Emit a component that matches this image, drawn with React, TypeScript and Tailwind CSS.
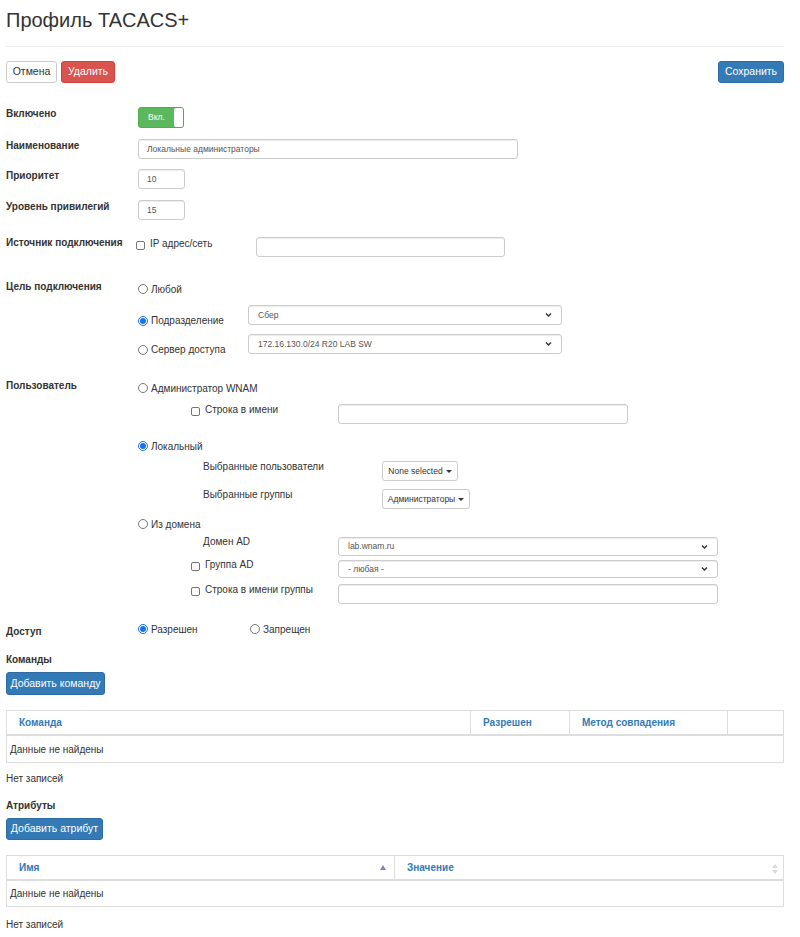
import React from 'react'

function Radio({ checked = false }: { checked?: boolean }) {
    return checked ? (
        <span className="inline-flex w-[10px] h-[10px] rounded-full border border-[#1a73e8] bg-white items-center justify-center shrink-0">
            <span className="w-[6px] h-[6px] rounded-full bg-[#1a73e8]" />
        </span>
    ) : (
        <span className="inline-block w-[10px] h-[10px] rounded-full border border-[#767676] bg-white shrink-0" />
    )
}

function Check() {
    return <span className="inline-block w-[9px] h-[9px] rounded-[2px] border border-[#767676] bg-white shrink-0" />
}

function Chevron() {
    return (
        <svg width="7" height="5" viewBox="0 0 7 5" className="absolute right-[9px] top-1/2 -translate-y-1/2">
            <path d="M1 1 L3.5 3.5 L6 1" stroke="#333" strokeWidth="1.4" fill="none" />
        </svg>
    )
}

function Select({ value, w, h = 20 }: { value: string; w: string; h?: number }) {
    return (
        <div
            className={`relative ${w} border border-[#ccc] rounded-[3px] bg-white shadow-[inset_0_1px_1px_rgba(0,0,0,0.075)] flex items-center pl-[9px] text-[8.5px] text-[#555]`}
            style={{ height: h }}
        >
            {value}
            <Chevron />
        </div>
    )
}

function Input({ value = '', w, h = 20 }: { value?: string; w: string; h?: number }) {
    return (
        <div
            className={`${w} border border-[#ccc] rounded-[3px] bg-white shadow-[inset_0_1px_1px_rgba(0,0,0,0.075)] flex items-center pl-[8px] text-[8.5px] text-[#555]`}
            style={{ height: h }}
        >
            {value}
        </div>
    )
}

function Caret() {
    return <span className="inline-block ml-[3px] w-0 h-0 border-l-[3px] border-r-[3px] border-t-[3px] border-l-transparent border-r-transparent border-t-[#333]" />
}

function DropBtn({ label, w }: { label: string; w: string }) {
    return (
        <div className={`${w} h-[20px] border border-[#ccc] rounded-[3px] bg-white flex items-center justify-center text-[8.5px] text-[#333]`}>
            {label}
            <Caret />
        </div>
    )
}

function Label({ children, className = '' }: { children: React.ReactNode; className?: string }) {
    return <div className={`w-[132px] shrink-0 font-bold text-[10px] leading-[12px] text-[#333] ${className}`}>{children}</div>
}

export default function App() {
    return (
        <div className="min-h-screen bg-white pl-[6px] pr-[16px] pt-[8px] pb-[10px] text-[#333] font-['Liberation_Sans',Arial,sans-serif]">
            <h1 className="text-[20px] leading-[24px] font-normal">Профиль TACACS+</h1>
            <div className="mt-[14px] border-t border-[#eee]" />

            {/* actions */}
            <div className="mt-[14px] flex items-center">
                <button className="h-[22px] w-[51px] border border-[#ccc] rounded-[3px] bg-white text-[10.5px] text-[#333]">Отмена</button>
                <button className="ml-[4px] h-[22px] w-[54px] border border-[#d43f3a] rounded-[3px] bg-[#d9534f] text-[10.5px] text-white">Удалить</button>
                <button className="ml-auto h-[22px] w-[66px] border border-[#2e6da4] rounded-[3px] bg-[#337ab7] text-[10.5px] text-white">Сохранить</button>
            </div>

            <div className="mt-[24px] flex h-[21px]">
                <Label className="pt-[1px]">Включено</Label>
                <div className="w-[46px] h-[21px] rounded-[3px] border border-[#4cae4c] bg-[#5cb85c] flex overflow-hidden">
                    <div className="flex-1 flex items-center justify-center text-[8.5px] text-white">Вкл.</div>
                    <div className="w-[9px] bg-white rounded-l-[2px]" />
                </div>
            </div>

            <div className="mt-[11px] flex h-[20px]">
                <Label className="pt-[1px]">Наименование</Label>
                <Input value="Локальные администраторы" w="w-[380px]" />
            </div>

            <div className="mt-[10px] flex h-[20px]">
                <Label className="pt-[1px]">Приоритет</Label>
                <Input value="10" w="w-[47px]" />
            </div>

            <div className="mt-[11px] flex h-[20px]">
                <Label className="pt-[1px]">Уровень привилегий</Label>
                <Input value="15" w="w-[47px]" />
            </div>

            <div className="mt-[17px] flex h-[20px]">
                <Label>Источник подключения</Label>
                <div className="-ml-[2px] w-[120px] flex items-start gap-[5px] pt-[1px] text-[10px] leading-[12px]">
                    <span className="mt-[3px]"><Check /></span>
                    <span>IP адрес/сеть</span>
                </div>
                <Input w="w-[249px]" />
            </div>

            {/* target */}
            <div className="mt-[24px] flex">
                <Label>Цель подключения</Label>
                <div className="flex flex-col">
                    <div className="h-[16px] flex items-center gap-[3px] text-[10px]">
                        <Radio />
                        <span>Любой</span>
                    </div>
                    <div className="mt-[8px] h-[20px] flex">
                        <div className="w-[110px] flex items-center gap-[3px] text-[10px] leading-[14px] pt-[9px] self-start">
                            <Radio checked />
                            <span>Подразделение</span>
                        </div>
                        <Select value="Сбер" w="w-[314px]" />
                    </div>
                    <div className="mt-[9px] h-[20px] flex">
                        <div className="w-[110px] flex items-center gap-[3px] text-[10px] leading-[14px] pt-[9px] self-start">
                            <Radio />
                            <span>Сервер доступа</span>
                        </div>
                        <Select value="172.16.130.0/24 R20 LAB SW" w="w-[314px]" />
                    </div>
                </div>
            </div>

            {/* user */}
            <div className="mt-[26px] flex">
                <Label>Пользователь</Label>
                <div className="flex flex-col text-[10px]">
                    <div className="h-[16px] flex items-center gap-[3px]">
                        <Radio />
                        <span>Администратор WNAM</span>
                    </div>
                    <div className="mt-[8px] h-[20px] flex">
                        <div className="ml-[53px] w-[147px] flex items-start gap-[5px] leading-[12px]">
                            <span className="mt-[3px]"><Check /></span>
                            <span>Строка в имени</span>
                        </div>
                        <Input w="w-[290px]" />
                    </div>
                    <div className="mt-[14px] h-[16px] flex items-center gap-[3px]">
                        <Radio checked />
                        <span>Локальный</span>
                    </div>
                    <div className="mt-[7px] h-[20px] flex">
                        <div className="ml-[65px] w-[179px] leading-[12px]">Выбранные пользователи</div>
                        <DropBtn label="None selected" w="w-[76px]" />
                    </div>
                    <div className="mt-[8px] h-[20px] flex">
                        <div className="ml-[65px] w-[179px] leading-[12px]">Выбранные группы</div>
                        <DropBtn label="Администраторы" w="w-[88px]" />
                    </div>
                    <div className="mt-[7px] h-[16px] flex items-center gap-[3px]">
                        <Radio />
                        <span>Из домена</span>
                    </div>
                    <div className="mt-[5px] h-[19px] flex">
                        <div className="ml-[65px] w-[135px] leading-[10px]">Домен AD</div>
                        <Select value="lab.wnam.ru" w="w-[380px]" h={19} />
                    </div>
                    <div className="mt-[4px] h-[18px] flex">
                        <div className="ml-[53px] w-[147px] flex items-start gap-[5px] leading-[12px] -mt-[1px]">
                            <span className="mt-[3px]"><Check /></span>
                            <span>Группа AD</span>
                        </div>
                        <Select value="- любая -" w="w-[380px]" h={18} />
                    </div>
                    <div className="mt-[6px] h-[20px] flex">
                        <div className="ml-[53px] w-[147px] flex items-start gap-[5px] leading-[12px]">
                            <span className="mt-[3px]"><Check /></span>
                            <span>Строка в имени группы</span>
                        </div>
                        <Input w="w-[380px]" />
                    </div>
                </div>
            </div>

            {/* access */}
            <div className="mt-[17px] flex h-[16px]">
                <Label className="pt-[5px]">Доступ</Label>
                <div className="w-[112px] flex items-center gap-[3px] text-[10px]">
                    <Radio checked />
                    <span>Разрешен</span>
                </div>
                <div className="flex items-center gap-[3px] text-[10px]">
                    <Radio />
                    <span>Запрещен</span>
                </div>
            </div>

            {/* commands */}
            <div className="mt-[17px] font-bold text-[10px] leading-[12px]">Команды</div>
            <button className="mt-[6px] h-[23px] w-[99px] border border-[#2e6da4] rounded-[3px] bg-[#337ab7] text-[10.5px] text-white">Добавить команду</button>

            <div className="mt-[15px] border border-[#ddd]">
                <div className="grid grid-cols-[464px_99px_158px_1fr] h-[25px] border-b-2 border-[#ddd] text-[10px] font-bold text-[#337ab7]">
                    <div className="flex items-center pl-[12px] border-r border-[#ddd]">Команда</div>
                    <div className="flex items-center pl-[12px] border-r border-[#ddd]">Разрешен</div>
                    <div className="flex items-center pl-[12px] border-r border-[#ddd]">Метод совпадения</div>
                    <div />
                </div>
                <div className="h-[26px] flex items-center pl-[3px] text-[10px]">Данные не найдены</div>
            </div>
            <div className="mt-[10px] text-[10px] leading-[12px]">Нет записей</div>

            {/* attributes */}
            <div className="mt-[15px] font-bold text-[10px] leading-[12px]">Атрибуты</div>
            <button className="mt-[6px] h-[22px] w-[97px] border border-[#2e6da4] rounded-[3px] bg-[#337ab7] text-[10.5px] text-white">Добавить атрибут</button>

            <div className="mt-[15px] border border-[#ddd]">
                <div className="grid grid-cols-2 h-[25px] border-b-2 border-[#ddd] text-[10px] font-bold text-[#337ab7]">
                    <div className="relative flex items-center pl-[12px] border-r border-[#ddd]">
                        Имя
                        <svg width="6" height="5" viewBox="0 0 6 5" className="absolute right-[8px] top-[9px]">
                            <path d="M0 5 L3 0 L6 5 Z" fill="#7b86c9" />
                        </svg>
                    </div>
                    <div className="relative flex items-center pl-[12px]">
                        Значение
                        <svg width="6" height="10" viewBox="0 0 6 10" className="absolute right-[5px] top-[8px]">
                            <path d="M0 4 L3 0 L6 4 Z" fill="#d9d9d9" />
                            <path d="M0 6 L3 10 L6 6 Z" fill="#d9d9d9" />
                        </svg>
                    </div>
                </div>
                <div className="h-[25px] flex items-center pl-[3px] text-[10px]">Данные не найдены</div>
            </div>
            <div className="mt-[12px] text-[10px] leading-[12px]">Нет записей</div>
        </div>
    )
}
